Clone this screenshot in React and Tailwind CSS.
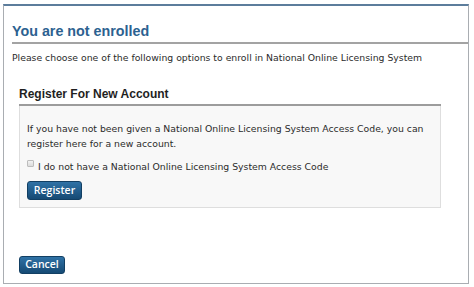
import React from 'react';

export default function App() {
    return (
        <div className="w-[474px] h-[287px] bg-white overflow-hidden pt-[4px] pl-[3px]">
            {/* Outer frame */}
            <div className="w-[466px] h-[280px] border border-[#a9adb2] border-t-2 border-t-[#5c7d9c] flex flex-col">
                {/* Page title */}
                <div className="ml-[8px] mt-[16px] pb-[2px] border-b-2 border-[#a3a3a3]">
                    <h1 className="text-[14.3px] leading-[18px] font-bold text-[#2c6190] font-['Liberation_Sans',Arial,sans-serif]">
                        You are not enrolled
                    </h1>
                </div>

                <p className="ml-[8px] mt-[6px] text-[9.3px] leading-[15px] text-[#2b2b2b] font-['DejaVu_Sans',Verdana,sans-serif]">
                    Please choose one of the following options to enroll in National Online Licensing System
                </p>

                {/* Register section */}
                <div className="ml-[15px] mr-[27px] mt-[21px]">
                    <h2 className="text-[12px] leading-[16px] font-bold text-[#1f1f1f] pb-[2px] border-b-2 border-[#9c9c9c] font-['Liberation_Sans',Arial,sans-serif]">
                        Register For New Account
                    </h2>
                    <div className="bg-[#f8f8f8] border border-[#dedede] border-t-0 px-[7px] pt-[15px] pb-[7px] text-[9.3px] leading-[15px] text-[#2b2b2b] font-['DejaVu_Sans',Verdana,sans-serif]">
                        <p>
                            If you have not been given a National Online Licensing System Access Code, you can register here for a new account.
                        </p>
                        <label className="mt-[8px] flex items-start gap-[4px]">
                            <span className="mt-[1px] w-[7px] h-[7px] border border-[#bdbdbd] bg-gradient-to-b from-[#f2f2f2] to-[#dcdcdc] rounded-[1px] shrink-0"></span>
                            <span>I do not have a National Online Licensing System Access Code</span>
                        </label>
                        <button className="mt-[7px] w-[55px] h-[19px] rounded-[3px] border border-[#123f63] bg-gradient-to-b from-[#2f72a6] to-[#164a74] text-white text-[10.5px] font-semibold font-['Open_Sans',Arial,sans-serif] flex items-center justify-center">
                            Register
                        </button>
                    </div>
                </div>

                {/* Cancel */}
                <div className="ml-[15px] mt-[48px]">
                    <button className="w-[46px] h-[18px] rounded-[3px] border border-[#123f63] bg-gradient-to-b from-[#2f72a6] to-[#164a74] text-white text-[10.5px] font-semibold font-['Open_Sans',Arial,sans-serif] flex items-center justify-center">
                        Cancel
                    </button>
                </div>
            </div>
        </div>
    );
}
